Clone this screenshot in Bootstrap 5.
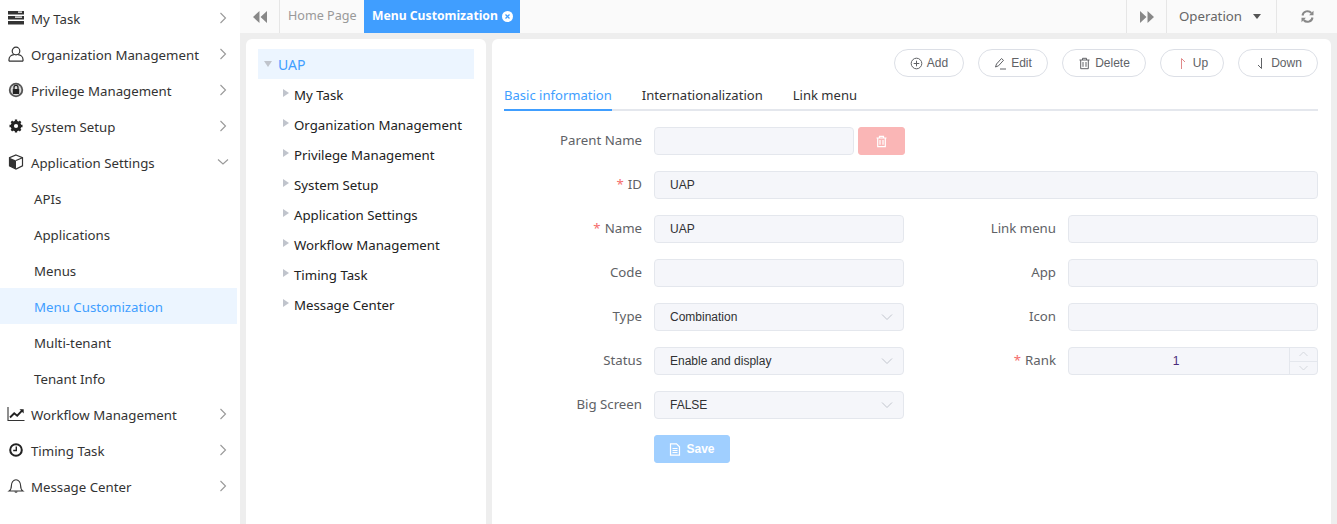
<!DOCTYPE html>
<html lang="en">
<head>
  <meta charset="UTF-8">
  <title>Menu Customization</title>
  <link rel="stylesheet" href="https://cdn.jsdelivr.net/npm/bootstrap@5.3.0/dist/css/bootstrap.min.css">
  <style>
    html, body { height: 100%; overflow: hidden; }
    body { background: #eee; font-family: "Noto Sans", "Liberation Sans", sans-serif; font-size: 13.25px; color: #333; }
    .app { height: 524px; }

    /* side menu */
    .side { width: 240px; background: #fff; padding: 0 3px 0 0; flex: none; }
    .side-item { height: 36px; padding-left: 7px; padding-right: 10px; color: #333; text-decoration: none; padding-top: 3px; }
    .side-item svg { margin-top: -3px; }
    .side-item svg.ico { width: 18px; height: 16px; margin-right: 6px; flex: none; }
    .side-item svg.arrow { width: 8px; height: 12px; margin-left: auto; flex: none; }
    .side-item svg.arrow.open { width: 12px; height: 8px; margin-right: -2px; }
    .side-sub { padding-left: 34px; }
    .side-sub.on { background: #ecf5ff; color: #409eff; }

    /* tab strip */
    .strip { height: 33px; background: #fafafa; color: #999; }
    .strip-btn { height: 33px; border-right: 1px solid #e6e6e6; flex: none; }
    .strip-btn.left { width: 40px; }
    .strip-btn.fwd { width: 41px; border-left: 1px solid #e6e6e6; }
    .strip-btn.oper { width: 110px; color: #666; gap: 11px; padding-right: 3px; }
    .strip-btn.refresh { width: 60px; border-right: 0; }
    .strip-tab { height: 33px; padding: 0 8px; width: 84px; flex: none; white-space: nowrap; font-size: 12.6px; }
    .strip-tab.on { background: #409eff; color: #fff; font-weight: 700; font-size: 12.2px; width: 156px; gap: 4px; }
    .caret-down { border-left: 4px solid transparent; border-right: 4px solid transparent; border-top: 5px solid #555; }

    /* panels */
    .panels { padding: 6px 6px 0; gap: 6px; min-height: 0; }
    .panel { background: #fff; border-radius: 6px 6px 0 0; }
    .tree { width: 240px; padding: 10px 12px; flex: none; }
    .tree-row { height: 30px; color: #222; }
    .tree-row.root { background: #ecf5ff; color: #409eff; padding-left: 6px; gap: 6px; font-size: 14px; }
    .tree-row.leaf { padding-left: 25px; gap: 5px; padding-top: 4px; }
    .tri-r { border-top: 4.5px solid transparent; border-bottom: 4.5px solid transparent; border-left: 6px solid #c0c4cc; margin-top: -6px; }
    .tri-d { border-left: 4.5px solid transparent; border-right: 4.5px solid transparent; border-top: 6px solid #c0c4cc; }

    .detail { padding: 10px 13px 0 12px; flex: 1; min-width: 0; }
    .pill { height: 28px; border: 1px solid #dcdfe6; border-radius: 14px; background: #fff; color: #606266; font: 12px "Liberation Sans", sans-serif; padding: 0; gap: 4px; }
    .pill svg { width: 13px; height: 13px; flex: none; }
    .pill-add, .pill-edit { width: 70px; }
    .pill-del { width: 84px; }
    .pill-up { width: 64px; }
    .pill-down { width: 80px; }

    .tabs-line { border-bottom: 2px solid #e4e7ed; height: 34px; gap: 30px; margin-bottom: 16px; }
    .tabs-line .nav-link { padding: 0; height: 34px; line-height: 36px; color: #303133; border-bottom: 2px solid transparent; font-size: 13.05px; }
    .tabs-line .nav-link.active { color: #409eff; border-bottom-color: #409eff; }

    .form-wrap { display: grid; grid-template-columns: 138px 250px 140px 250px; column-gap: 12px; row-gap: 16px; grid-auto-rows: 28px; }
    .lbl { color: #606266; text-align: right; line-height: 26px; }
    .req { color: #f56c6c; margin-right: 4px; }
    .wide { grid-column: 2 / span 3; }
    .form-wrap .form-control, .form-wrap .form-select {
      height: 28px; min-height: 0; padding: 0 15px; background-color: #f5f6fa; border: 1px solid #e4e7ed; border-radius: 4px;
      font: 12px "Liberation Sans", sans-serif; color: #303133; box-shadow: none;
    }
    .form-wrap .form-select {
      background-image: url("data:image/svg+xml,%3Csvg xmlns='http://www.w3.org/2000/svg' viewBox='0 0 12 8'%3E%3Cpath d='M1 1.500l5 5 5-5' fill='none' stroke='%23c0c4cc' stroke-width='1'/%3E%3C/svg%3E");
      background-position: right 10px center; background-size: 12px 8px;
    }
    .parent-row { gap: 4px; width: 251px; }
    .parent-row .form-control { width: 200px; flex: none; }
    .del-mini { width: 47px; height: 28px; background: #fab6b6; border: 1px solid #fab6b6; border-radius: 3px; padding: 0; }
    .del-mini svg { width: 13px; height: 13px; }
    .save-btn { width: 76px; height: 28px; background: #a0cfff; border: 1px solid #a0cfff; border-radius: 3px; color: #fff; font: 700 12px "Liberation Sans", sans-serif; padding: 0; gap: 5px; opacity: 1; }
    .save-btn svg { width: 12px; height: 13px; }

    .rank-box { height: 28px; background: #f5f6fa; border: 1px solid #e4e7ed; border-radius: 4px; position: relative; font: 12px "Liberation Sans", sans-serif; color: #4a2a7a; padding-right: 34px; }
    .rank-steps { position: absolute; top: 0; right: 0; bottom: 0; width: 28px; border-left: 1px solid #e4e7ed; }
    .rank-steps > div { flex: 1; }
    .rank-steps > div + div { border-top: 1px solid #e4e7ed; }
    .rank-steps svg { width: 9px; height: 6px; }
  </style>
</head>
<body>
  <div class="app d-flex">
    <!-- side menu -->
    <div class="side">
      <a class="side-item d-flex align-items-center">
        <svg class="ico" viewBox="0 0 18 16"><path d="M1 1h16v3.500H1zM1 6h16v3.500H1zM1 11h16v3.500H1z" fill="#333"/><path d="M11 2.200h4M8 7.200h7" stroke="#fff" stroke-width="1.200"/></svg>
        My Task<svg class="arrow" viewBox="0 0 8 12"><path d="M1.500 1l5 5-5 5" fill="none" stroke="#999" stroke-width="1.100"/></svg>
      </a>
      <a class="side-item d-flex align-items-center">
        <svg class="ico" viewBox="0 0 18 16"><circle cx="9" cy="5" r="3.800" fill="none" stroke="#333" stroke-width="1.200"/><path d="M2 15.200v-1.700c0-2.600 2.400-4.600 4.900-4.900M16 15.200v-1.700c0-2.600-2.400-4.600-4.900-4.900M2 15.200h14" fill="none" stroke="#333" stroke-width="1.200"/></svg>
        Organization Management<svg class="arrow" viewBox="0 0 8 12"><path d="M1.500 1l5 5-5 5" fill="none" stroke="#999" stroke-width="1.100"/></svg>
      </a>
      <a class="side-item d-flex align-items-center">
        <svg class="ico" viewBox="0 0 18 16"><circle cx="9" cy="8" r="7.200" fill="#555"/><circle cx="9" cy="8" r="5.400" fill="#ddd"/><rect x="5.800" y="7" width="6.400" height="5" rx=".6" fill="#222"/><path d="M7 7V5.400a2 2 0 0 1 4 0V7" fill="none" stroke="#222" stroke-width="1.300"/></svg>
        Privilege Management<svg class="arrow" viewBox="0 0 8 12"><path d="M1.500 1l5 5-5 5" fill="none" stroke="#999" stroke-width="1.100"/></svg>
      </a>
      <a class="side-item d-flex align-items-center">
        <svg class="ico" viewBox="0 0 18 16"><circle cx="9" cy="8" r="3.900" fill="none" stroke="#222" stroke-width="2.800"/><path d="M9 1.500v13M2.500 8h13M4.400 3.400l9.200 9.200M13.600 3.400l-9.200 9.200" stroke="#222" stroke-width="2.300"/><circle cx="9" cy="8" r="2.100" fill="#fff"/></svg>
        System Setup<svg class="arrow" viewBox="0 0 8 12"><path d="M1.500 1l5 5-5 5" fill="none" stroke="#999" stroke-width="1.100"/></svg>
      </a>
      <a class="side-item d-flex align-items-center">
        <svg class="ico" viewBox="0 0 18 16"><path d="M9 1l6.500 2.700v8.200L9 15l-6.500-3.100V3.700z" fill="none" stroke="#333" stroke-width="1.200"/><path d="M2.500 3.700L9 6.500V15l-6.500-3.100z" fill="#333"/><path d="M9 6.500l6.500-2.800" stroke="#333" stroke-width="1.200"/></svg>
        Application Settings<svg class="arrow open" viewBox="0 0 12 8"><path d="M1 1.500l5 4.500 5-4.500" fill="none" stroke="#999" stroke-width="1.100"/></svg>
      </a>
      <a class="side-item side-sub d-flex align-items-center">APIs</a>
      <a class="side-item side-sub d-flex align-items-center">Applications</a>
      <a class="side-item side-sub d-flex align-items-center">Menus</a>
      <a class="side-item side-sub on d-flex align-items-center">Menu Customization</a>
      <a class="side-item side-sub d-flex align-items-center">Multi-tenant</a>
      <a class="side-item side-sub d-flex align-items-center">Tenant Info</a>
      <a class="side-item d-flex align-items-center">
        <svg class="ico" viewBox="0 0 18 16"><path d="M1 1v13.500h16.500" fill="none" stroke="#333" stroke-width="1.100"/><path d="M3 11.500l4.200-4.200 3 2.400 5.300-5.600" fill="none" stroke="#222" stroke-width="1.900"/><path d="M12.500 3.200h4.200v4.200z" fill="#222"/></svg>
        Workflow Management<svg class="arrow" viewBox="0 0 8 12"><path d="M1.500 1l5 5-5 5" fill="none" stroke="#999" stroke-width="1.100"/></svg>
      </a>
      <a class="side-item d-flex align-items-center">
        <svg class="ico" viewBox="0 0 18 16"><circle cx="9" cy="8" r="5.800" fill="none" stroke="#222" stroke-width="2"/><path d="M9.300 4.500v4H6.200" fill="none" stroke="#222" stroke-width="1.400"/></svg>
        Timing Task<svg class="arrow" viewBox="0 0 8 12"><path d="M1.500 1l5 5-5 5" fill="none" stroke="#999" stroke-width="1.100"/></svg>
      </a>
      <a class="side-item d-flex align-items-center">
        <svg class="ico" viewBox="0 0 18 16"><path d="M2.200 13c2-1.300 2.200-2.900 2.200-5.400 0-3 1.900-5.900 4.600-5.900s4.600 2.900 4.600 5.900c0 2.500.2 4.100 2.200 5.400z" fill="none" stroke="#333" stroke-width="1.100"/><path d="M7.300 13.600a1.800 1.800 0 0 0 3.400 0z" fill="#333"/></svg>
        Message Center<svg class="arrow" viewBox="0 0 8 12"><path d="M1.500 1l5 5-5 5" fill="none" stroke="#999" stroke-width="1.100"/></svg>
      </a>
    </div>

    <div class="d-flex flex-column flex-grow-1" style="min-width:0">
      <!-- tab strip -->
      <div class="strip d-flex align-items-center">
        <div class="strip-btn left d-flex align-items-center justify-content-center">
          <svg width="14" height="12" viewBox="0 0 13 11"><path d="M6 0v11L0 5.500zM13 0v11L7 5.500z" fill="#888"/></svg>
        </div>
        <div class="strip-tab d-flex align-items-center">Home Page</div>
        <div class="strip-tab on d-flex align-items-center">Menu Customization
          <svg width="11" height="11" viewBox="0 0 11 11" class="flex-shrink-0"><circle cx="5.500" cy="5.500" r="5.500" fill="#fff"/><path d="M3.500 3.500l4 4M7.500 3.500l-4 4" stroke="#409eff" stroke-width="1.300"/></svg>
        </div>
        <div class="strip-btn fwd ms-auto d-flex align-items-center justify-content-center">
          <svg width="14" height="12" viewBox="0 0 13 11"><path d="M0 0v11l6-5.500zM7 0v11l6-5.500z" fill="#888"/></svg>
        </div>
        <div class="strip-btn oper d-flex align-items-center justify-content-center">Operation <span class="caret-down"></span></div>
        <div class="strip-btn refresh d-flex align-items-center justify-content-center">
          <svg width="13" height="13" viewBox="0 0 13 13"><path d="M1.500 5.500A5 5 0 0 1 10.300 3" fill="none" stroke="#888" stroke-width="2"/><path d="M12.500 .8v4.400H8.100z" fill="#888"/><path d="M11.500 7.500A5 5 0 0 1 2.700 10" fill="none" stroke="#888" stroke-width="2"/><path d="M.5 12.200V7.800h4.400z" fill="#888"/></svg>
        </div>
      </div>

      <div class="panels d-flex flex-grow-1">
        <!-- menu tree -->
        <div class="panel tree">
          <div class="tree-row root d-flex align-items-center"><span class="tri-d"></span>UAP</div>
          <div class="tree-row leaf d-flex align-items-center"><span class="tri-r"></span>My Task</div>
          <div class="tree-row leaf d-flex align-items-center"><span class="tri-r"></span>Organization Management</div>
          <div class="tree-row leaf d-flex align-items-center"><span class="tri-r"></span>Privilege Management</div>
          <div class="tree-row leaf d-flex align-items-center"><span class="tri-r"></span>System Setup</div>
          <div class="tree-row leaf d-flex align-items-center"><span class="tri-r"></span>Application Settings</div>
          <div class="tree-row leaf d-flex align-items-center"><span class="tri-r"></span>Workflow Management</div>
          <div class="tree-row leaf d-flex align-items-center"><span class="tri-r"></span>Timing Task</div>
          <div class="tree-row leaf d-flex align-items-center"><span class="tri-r"></span>Message Center</div>
        </div>

        <!-- detail -->
        <div class="panel detail">
          <div class="d-flex justify-content-end" style="gap:14px">
            <button class="btn pill pill-add d-flex align-items-center justify-content-center">
              <svg viewBox="0 0 13 13"><circle cx="6.500" cy="6.500" r="5.300" fill="none" stroke="#606266"/><path d="M6.500 3.700v5.600M3.700 6.500h5.600" stroke="#606266"/></svg>Add</button>
            <button class="btn pill pill-edit d-flex align-items-center justify-content-center">
              <svg viewBox="0 0 13 13"><path d="M1.500 10l1-3 5-5.500 2 1.800-5 5.500zM6 12h6" fill="none" stroke="#606266"/></svg>Edit</button>
            <button class="btn pill pill-del d-flex align-items-center justify-content-center">
              <svg viewBox="0 0 13 13"><path d="M1.500 3h10M4.500 3V1.300h4V3M2.700 3v8.700h7.600V3M5 5v4.800M8 5v4.800" fill="none" stroke="#606266"/></svg>Delete</button>
            <button class="btn pill pill-up d-flex align-items-center justify-content-center">
              <svg viewBox="0 0 13 13"><path d="M5.500 12V1.500L9 5" fill="none" stroke="#e08a8a"/></svg>Up</button>
            <button class="btn pill pill-down d-flex align-items-center justify-content-center">
              <svg viewBox="0 0 13 13"><path d="M7.500 1v10.500L4 8" fill="none" stroke="#606266"/></svg>Down</button>
          </div>

          <ul class="nav tabs-line">
            <li class="nav-item"><a class="nav-link active">Basic information</a></li>
            <li class="nav-item"><a class="nav-link">Internationalization</a></li>
            <li class="nav-item"><a class="nav-link">Link menu</a></li>
          </ul>

          <div class="form-wrap">
            <div class="lbl">Parent Name</div>
            <div class="wide d-flex parent-row">
              <input class="form-control" value="">
              <button class="btn del-mini d-flex align-items-center justify-content-center">
                <svg viewBox="0 0 13 13"><path d="M1.500 3h10M4.500 3V1.300h4V3M2.700 3v8.700h7.600V3M5 5v4.800M8 5v4.800" fill="none" stroke="#fff" stroke-width="1.200"/></svg>
              </button>
            </div>

            <div class="lbl"><span class="req">*</span>ID</div>
            <input class="form-control wide" value="UAP">

            <div class="lbl"><span class="req">*</span>Name</div>
            <input class="form-control" value="UAP">
            <div class="lbl">Link menu</div>
            <input class="form-control" value="">

            <div class="lbl">Code</div>
            <input class="form-control" value="">
            <div class="lbl">App</div>
            <input class="form-control" value="">

            <div class="lbl">Type</div>
            <select class="form-select"><option>Combination</option></select>
            <div class="lbl">Icon</div>
            <input class="form-control" value="">

            <div class="lbl">Status</div>
            <select class="form-select"><option>Enable and display</option></select>
            <div class="lbl"><span class="req">*</span>Rank</div>
            <div class="rank-box d-flex align-items-center justify-content-center">1
              <div class="rank-steps d-flex flex-column">
                <div class="d-flex align-items-center justify-content-center"><svg viewBox="0 0 9 6"><path d="M.5 5l4-4 4 4" fill="none" stroke="#d5d8de"/></svg></div>
                <div class="d-flex align-items-center justify-content-center"><svg viewBox="0 0 9 6"><path d="M.5 1l4 4 4-4" fill="none" stroke="#d5d8de"/></svg></div>
              </div>
            </div>

            <div class="lbl">Big Screen</div>
            <select class="form-select"><option>FALSE</option></select>
            <div></div><div></div>

            <div></div>
            <div>
              <button class="btn save-btn d-flex align-items-center justify-content-center">
                <svg viewBox="0 0 12 13"><path d="M1.500 .8h6l3 3v8.400h-9z" fill="none" stroke="#fff" stroke-width="1.200"/><path d="M3.500 5.500h5M3.500 7.500h5M3.500 9.500h5" stroke="#fff"/></svg>Save</button>
            </div>
          </div>
        </div>
      </div>
    </div>
  </div>
  <script src="https://cdn.jsdelivr.net/npm/bootstrap@5.3.0/dist/js/bootstrap.bundle.min.js"></script>
</body>
</html>
